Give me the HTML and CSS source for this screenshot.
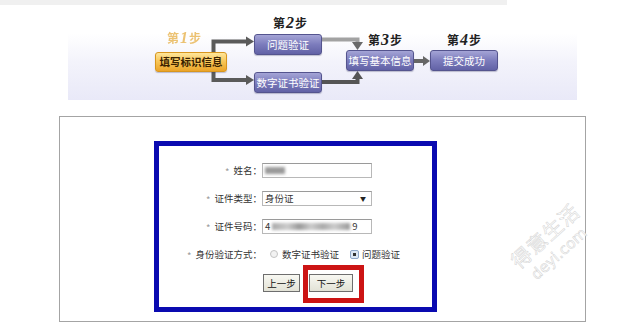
FILE: index.html
```html
<!DOCTYPE html>
<html>
<head>
    <meta charset="UTF-8">
    <title>身份验证 - 填写标识信息</title>
    <link rel="stylesheet" href="styles.css">
</head>
<body>
    <div class="topbar"></div>

    <div class="steps">
        <svg class="links" width="509" height="95" viewBox="0 0 509 95">
            <!-- step 1 bracket -->
            <path d="M145.5 34.5 V77 M145.5 36.5 H180 M145.5 75 H180" stroke="#5a5a5a" stroke-width="4" fill="none"/>
            <polygon points="178,31.5 186,36.5 178,41.5" fill="#5a5a5a"/>
            <polygon points="178,70 186,75 178,80" fill="#5a5a5a"/>
            <!-- into step 3 -->
            <path d="M254 34.5 H289.5 V38" stroke="#a2a2a2" stroke-width="4" fill="none"/>
            <polygon points="284,37 295,37 289.5,45" fill="#6a6a6a"/>
            <path d="M254 77 H289.5 V73" stroke="#555" stroke-width="4" fill="none"/>
            <polygon points="284,74 295,74 289.5,66" fill="#555"/>
            <!-- step 3 to 4 -->
            <path d="M346 56 H356" stroke="#666" stroke-width="4" fill="none"/>
            <polygon points="355,51 362,56 355,61" fill="#666"/>
        </svg>

        <div class="step-label first s1">第<b>1</b>步</div>
        <div class="node orange n1">填写标识信息</div>

        <div class="step-label s2">第<b>2</b>步</div>
        <div class="node n2">问题验证</div>
        <div class="node n3">数字证书验证</div>

        <div class="step-label s3">第<b>3</b>步</div>
        <div class="node n4">填写基本信息</div>

        <div class="step-label s4">第<b>4</b>步</div>
        <div class="node n5">提交成功</div>
    </div>

    <div class="panel">
        <div class="form-box">
            <div class="row">
                <span class="label"><i>*</i>姓名：</span>
                <div class="input"><span class="blur name"></span></div>
            </div>
            <div class="row">
                <span class="label"><i>*</i>证件类型：</span>
                <div class="input select">身份证<span class="arrow">▼</span></div>
            </div>
            <div class="row">
                <span class="label"><i>*</i>证件号码：</span>
                <div class="input">4<span class="blur idno"></span>9</div>
            </div>
            <div class="row">
                <span class="label"><i>*</i>身份验证方式：</span>
                <div class="radios">
                    <span class="radio"></span><span class="radio-text">数字证书验证</span>
                    <span class="radio checked"></span><span class="radio-text">问题验证</span>
                </div>
            </div>
            <div class="row buttons">
                <button class="btn">上一步</button>
                <span class="highlight"><button class="btn next">下一步</button></span>
            </div>
        </div>
    </div>

    <div class="watermark">
        <div class="wm-cn">得意生活</div>
        <div class="wm-en">deyi.com</div>
    </div>
</body>
</html>
```

FILE: styles.css
```css
* { margin: 0; padding: 0; box-sizing: border-box; }
body {
    background: #fff;
    font-family: "Noto Sans CJK SC", "Noto Sans", sans-serif;
    color: #222;
    position: relative;
    width: 641px;
    height: 323px;
    overflow: hidden;
}

.topbar {
    width: 507px;
    height: 5px;
    background: #f0f0f0;
}

/* step diagram */
.steps {
    position: relative;
    width: 509px;
    height: 95px;
    margin-left: 68px;
    background: linear-gradient(to bottom, #fff 0, #fff 30%, #f3f3fb 60%, #e9e9f8 100%);
}
.links { position: absolute; left: 0; top: 0; }

.step-label {
    position: absolute;
    font-size: 12px;
    font-weight: bold;
    line-height: 14px;
    color: #222;
    white-space: nowrap;
}
.step-label b {
    font-family: "Liberation Serif", serif;
    font-style: italic;
    font-size: 16px;
    margin: 0 1px;
}
.step-label.first { color: #e8b450; opacity: 0.8; }
.s1 { left: 99px; top: 26px; }
.s2 { left: 205px; top: 11px; }
.s3 { left: 300px; top: 28px; }
.s4 { left: 379px; top: 28px; }

.node {
    position: absolute;
    width: 68px;
    height: 21px;
    border: 1px solid #54548e;
    border-radius: 3px;
    background: linear-gradient(to bottom, #a4a4d6 0%, #7c7cbc 50%, #6262a6 100%);
    color: #fff;
    font-size: 10.5px;
    line-height: 19px;
    text-align: center;
    white-space: nowrap;
    box-shadow: 0 1px 1px rgba(60, 60, 100, 0.3);
}
.node.orange {
    width: 72px;
    height: 20px;
    line-height: 18px;
    border-color: #d8961e;
    background: linear-gradient(to bottom, #ffe69a 0%, #f7c455 50%, #eba42a 100%);
    color: #3a2200;
    font-weight: bold;
}
.n1 { left: 87px; top: 47px; }
.n2 { left: 186px; top: 29px; }
.n3 { left: 186px; top: 67px; }
.n4 { left: 278px; top: 45px; }
.n5 { left: 362px; top: 45px; }

/* form */
.panel {
    width: 527px;
    height: 206px;
    margin: 16px 0 0 59px;
    border: 1px solid #a4a4a4;
    padding: 24px 0 0 94px;
}
.form-box {
    width: 283px;
    height: 171px;
    border: 5px solid #0a0ab0;
    padding-top: 16px;
    display: flex;
    flex-direction: column;
    gap: 12px;
    font-size: 9.5px;
    color: #333;
}
.row {
    display: flex;
    align-items: center;
    height: 16px;
}
.label {
    width: 103px;
    text-align: right;
    white-space: nowrap;
}
.label i {
    font-style: normal;
    color: #999;
    margin-right: 4px;
    position: relative;
    top: 2px;
}
.input {
    width: 110px;
    height: 15px;
    border: 1px solid #b8b8b8;
    border-top-color: #9a9a9a;
    background: #fff;
    display: flex;
    align-items: center;
    padding-left: 2px;
    white-space: nowrap;
}
.select { position: relative; }
.arrow {
    margin-left: auto;
    margin-right: 5px;
    font-size: 6px;
    color: #222;
}
.blur {
    display: inline-block;
    height: 7px;
    filter: blur(1.5px);
}
.blur.name { width: 20px; background: #9a9a9a; }
.blur.idno {
    width: 78px;
    margin: 0 2px;
    background: linear-gradient(to right, #aaa 0, #ccc 20%, #999 35%, #ccc 50%, #aaa 65%, #ccc 80%, #999 100%);
}

.radios {
    display: flex;
    align-items: center;
    margin-left: 8px;
}
.radio {
    width: 8px;
    height: 8px;
    border: 1px solid #c4c4c4;
    border-radius: 50%;
    background: #f2f2f2;
    margin-right: 4px;
}
.radio.checked {
    width: 9px;
    height: 9px;
    border-radius: 2px;
    border-color: #8ea6c8;
    background: #dde7f4;
    margin-left: 11px;
    margin-right: 3px;
    position: relative;
}
.radio.checked::after {
    content: "";
    position: absolute;
    left: 2px;
    top: 2px;
    width: 3px;
    height: 3px;
    background: #333;
}

.buttons {
    height: 18px;
    padding-left: 104px;
    gap: 9px;
}
.btn {
    height: 18px;
    width: 37px;
    border: 1px solid #6e6e6e;
    background: linear-gradient(to bottom, #f8f8f2, #e2e2d6);
    font-family: inherit;
    font-size: 9.5px;
    color: #111;
}
.btn.next { width: 44px; display: block; }
.highlight { position: relative; }
.highlight::after {
    content: "";
    position: absolute;
    top: -9px;
    bottom: -11px;
    left: -6px;
    right: -11px;
    border: 5px solid #cc1414;
}

/* watermark */
.watermark {
    position: absolute;
    left: 508px;
    top: 216px;
    width: 96px;
    transform: rotate(-42deg);
    color: #fff;
    -webkit-text-stroke: 0.5px #d2d2d2;
    pointer-events: none;
}
.wm-cn { font-size: 20px; line-height: 26px; letter-spacing: 1px; }
.wm-en { font-family: "DejaVu Sans", sans-serif; font-size: 15px; line-height: 20px; padding-left: 6px; }
```
